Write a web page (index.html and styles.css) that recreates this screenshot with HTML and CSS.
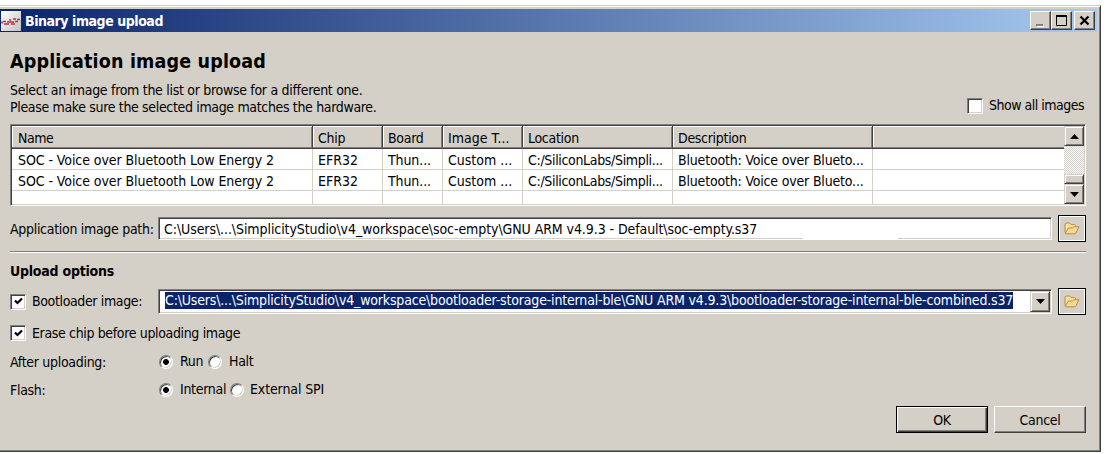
FILE: index.html
```
<!DOCTYPE html>
<html lang="en">
<head>
<meta charset="utf-8">
<title>Binary image upload</title>
<link rel="stylesheet" href="styles.css">
</head>
<body>
<main class="window">
  <header class="titlebar">
    <svg class="app-icon" width="20" height="20" viewBox="0 0 20 20">
      <defs><linearGradient id="tile" x1="0" y1="0" x2="1" y2="1"><stop offset="0" stop-color="#fff"/><stop offset="1" stop-color="#bfc0c8"/></linearGradient></defs>
      <rect width="20" height="20" fill="url(#tile)"/>
      <path d="M1 12.500V10.500M2 10.500H5M3 13H8M6 11H13M8 9H10M12 8H15M10 13H14M14 10.500H17M16 8.500H19" fill="none" stroke="#c8283c" stroke-width="1.700"/>
    </svg>
    <span class="title-text">Binary image upload</span>
    <button class="win-btn"><svg width="17" height="15"><path d="M5 13.500h7" stroke="#fff"/><path d="M4 12h7" stroke="#808080" stroke-width="2"/></svg></button>
    <button class="win-btn"><svg width="17" height="15"><path d="M3.500 2.500h10v10h-10z" fill="none" stroke="#000"/><path d="M3 3h11" stroke="#000" stroke-width="2"/></svg></button>
    <button class="win-btn close"><svg width="17" height="15"><path d="M4.500 3.500l8 8M12.500 3.500l-8 8" stroke="#000" stroke-width="2.200"/></svg></button>
  </header>

  <section class="content">
    <h1>Application image upload</h1>
    <div class="intro">
      <p><span class="intro-a">Select an image from the list or browse for a different one.</span><br><span class="intro-b">Please make sure the selected image matches the hardware.</span></p>
      <label class="show-all"><i class="check"></i><span>Show all images</span></label>
    </div>

    <div class="table">
      <div class="grid">
        <div class="row head"><div class="name">Name</div><div>Chip</div><div>Board</div><div class="type">Image T...</div><div>Location</div><div>Description</div><div></div></div>
        <div class="row"><div class="soc">SOC - Voice over Bluetooth Low Energy 2</div><div class="efr">EFR32</div><div class="thun">Thun...</div><div class="type">Custom ...</div><div class="loc">C:/SiliconLabs/Simpli...</div><div class="desc">Bluetooth: Voice over Blueto...</div><div></div></div>
        <div class="row"><div class="soc">SOC - Voice over Bluetooth Low Energy 2</div><div class="efr">EFR32</div><div class="thun">Thun...</div><div class="type">Custom ...</div><div class="loc">C:/SiliconLabs/Simpli...</div><div class="desc">Bluetooth: Voice over Blueto...</div><div></div></div>
        <div class="row last"><div></div><div></div><div></div><div></div><div></div><div></div><div></div></div>
      </div>
      <div class="scrollbar">
        <div class="sb-btn"><svg width="9" height="5"><path d="M0 5L4.500 0L9 5z"/></svg></div>
        <div class="track"></div>
        <div class="thumb"></div>
        <div class="sb-btn"><svg width="9" height="5"><path d="M0 0L4.500 5L9 0z"/></svg></div>
      </div>
    </div>

    <div class="path-row">
      <span class="path-label">Application image path:</span>
      <div class="field"><span class="path-a">C:\Users\...\SimplicityStudio\v4_workspace\soc-empty\GNU ARM v4.9.3 - Default\soc-empty.s37</span><i class="field-gap"></i></div>
      <button class="browse"><svg width="16" height="13" viewBox="0 0 16 13"><path d="M1 10.500V2L2.500 1H5.500L7 2.500H10.500L11.500 3.500V6" fill="#f5df9e" stroke="#b98a4a"/><path d="M1.300 11L4.500 6H8.500L10 4.700H15L11.800 11.200Q11.500 11.800 11 11.800H2Q1.200 11.800 1.300 11z" fill="#fbd98c" stroke="#b98a4a"/></svg></button>
    </div>
    <hr>
    <h2>Upload options</h2>
    <div class="boot-row">
      <label class="boot-label"><i class="check"><svg width="9" height="9"><path d="M1 3.500L3.500 6L8 1.500" /></svg></i><span>Bootloader image:</span></label>
      <div class="field combo"><span class="path-b">C:\Users\...\SimplicityStudio\v4_workspace\bootloader-storage-internal-ble\GNU ARM v4.9.3\bootloader-storage-internal-ble-combined.s37</span><div class="sb-btn drop"><svg width="9" height="5"><path d="M0 0L4.500 5L9 0z"/></svg></div></div>
      <button class="browse"><svg width="16" height="13" viewBox="0 0 16 13"><path d="M1 10.500V2L2.500 1H5.500L7 2.500H10.500L11.500 3.500V6" fill="#f5df9e" stroke="#b98a4a"/><path d="M1.300 11L4.500 6H8.500L10 4.700H15L11.800 11.200Q11.500 11.800 11 11.800H2Q1.200 11.800 1.300 11z" fill="#fbd98c" stroke="#b98a4a"/></svg></button>
    </div>
    <label class="erase"><i class="check"><svg width="9" height="9"><path d="M1 3.500L3.500 6L8 1.500" /></svg></i><span>Erase chip before uploading image</span></label>
    <div class="radio-row after">
      <span class="radio-label">After uploading:</span>
      <i class="radio on"></i><span class="opt-run">Run</span><i class="radio"></i><span class="opt">Halt</span>
    </div>
    <div class="radio-row flash">
      <span class="radio-label">Flash:</span>
      <i class="radio on"></i><span class="opt-int">Internal</span><i class="radio"></i><span class="opt ext">External SPI</span>
    </div>
    <footer><button class="btn ok">OK</button><button class="btn">Cancel</button></footer>
  </section>
</main>
</body>
</html>
```
FILE: styles.css
```
* { box-sizing: border-box; }
body {
  margin: 0;
  padding-top: 5px;
  background: #fff;
  color: #000;
  font: 14px/17px "DejaVu Sans Condensed", "DejaVu Sans", sans-serif;
  font-stretch: condensed;
  letter-spacing: -0.3px;
  overflow: hidden;
  white-space: nowrap;
}
h1, h2, p { margin: 0; }
button { font: inherit; letter-spacing: inherit; color: inherit; padding: 0; border: 0; background: #d4d0c8; }
svg { display: block; }
i { display: block; flex: none; }

.window {
  width: 1101px;
  height: 447px;
  padding: 2px 2px 0 0;
  background: #d4d0c8;
  border-top: 1px solid #d4d0c8;
  border-right: 1px solid #404040;
  border-bottom: 1px solid #404040;
  box-shadow: inset 0 1px #fff, inset -1px -1px #808080;
}
.titlebar {
  display: flex;
  align-items: center;
  width: 1097px;
  height: 23px;
  margin-top: 1px;
  padding: 0 2px 0 1px;
  background: linear-gradient(90deg, #0a246a, #a6caf0);
}
.title-text { flex: 1; margin-left: 4px; padding-top: 2px; color: #fff; font-weight: bold; letter-spacing: -0.45px; }
.win-btn {
  display: grid;
  place-items: center;
  width: 21px;
  height: 19px;
  border: 1px solid;
  border-color: #fff #404040 #404040 #fff;
  box-shadow: inset -1px -1px #808080;
}
.close { margin-left: 2px; }

.content { padding: 0 0 0 10px; width: 1086px; }
h1 { height: 50px; padding-top: 18px; font-size: 19.5px; line-height: 24px; letter-spacing: 0.16px; }
.intro { display: flex; justify-content: space-between; height: 42px; }
.intro-a { letter-spacing: -0.3px; }
.intro-b { letter-spacing: -0.34px; }
.show-all { display: flex; align-items: center; gap: 6px; height: 17px; margin-top: 15px; width: 119px; letter-spacing: -0.5px; }
.check {
  display: grid;
  place-items: center;
  width: 16px;
  height: 16px;
  background: #fff;
  border: 1px solid;
  border-color: #808080 #fff #fff #808080;
  box-shadow: inset 1px 1px #404040, inset -1px -1px #d4d0c8;
}
.check path { fill: none; stroke: #000; stroke-width: 2.2; }

.table {
  display: flex;
  height: 82px;
  padding: 1px;
  background: #fff;
  border: 1px solid;
  border-color: #808080 #fff #fff #808080;
  box-shadow: inset 1px 1px #404040, inset -1px -1px #d4d0c8;
}
.grid { flex: 1; }
.row { display: grid; grid-template-columns: 301px 70px 60px 80px 150px 200px 1fr; height: 21px; }
.row > div { padding: 3px 0 0 5px; border-right: 1px solid #d4d0c8; border-bottom: 1px solid #d4d0c8; }
.row > div:first-child { padding-left: 6px; }
.row > div:last-child { border-right: 0; }
.row.head { height: 23px; background: #d4d0c8; border-bottom: 1px solid #404040; }
.row.head > div { padding-top: 4px; border-bottom-color: #808080; border-right-color: #404040; box-shadow: inset 1px 1px #fff, inset -1px 0 #808080; }
.row.head > div:last-child { box-shadow: inset 1px 1px #fff; }
.row.last { height: 14px; }
.row.head .name { letter-spacing: -0.5px; }
.row .soc { letter-spacing: -0.07px; }
.row .efr { letter-spacing: 0; }
.row .thun { letter-spacing: -0.1px; }
.row .type { letter-spacing: 0; }
.row .loc { letter-spacing: -0.33px; }
.row .desc { letter-spacing: -0.18px; }

.scrollbar { display: flex; flex-direction: column; width: 20px; }
.sb-btn, .thumb {
  display: grid;
  place-items: center;
  height: 20px;
  background: #d4d0c8;
  border: 1px solid;
  border-color: #d4d0c8 #404040 #404040 #d4d0c8;
  box-shadow: inset 1px 1px #fff, inset -1px -1px #808080;
}
.track { flex: 1; background: repeating-conic-gradient(#fff 0 25%, #d4d0c8 0 50%) 0 0 / 2px 2px; }
.thumb { height: 10px; }

.path-row, .boot-row { display: flex; align-items: center; height: 27px; }
.path-row { margin-top: 9px; }
.path-label { width: 148px; padding-top: 2px; }
.field {
  position: relative;
  width: 894px;
  height: 23px;
  margin-right: 6px;
  padding: 3px 0 0 5px;
  background: #fff;
  border: 1px solid;
  border-color: #808080 #fff #fff #808080;
  box-shadow: inset 1px 1px #404040, inset -1px -1px #d4d0c8;
}
.field-gap { position: absolute; left: 644px; bottom: 0; width: 95px; height: 1px; background: #fff; }
.path-a { letter-spacing: -0.08px; }
.browse {
  display: grid;
  place-items: center;
  width: 28px;
  height: 27px;
  border: 1px solid #000;
  box-shadow: inset 0 0 0 1px #fff;
}
hr { height: 2px; margin: 9px 0 0; border: 0; border-top: 1px solid #808080; background: #fff; }
h2 { margin-top: 10px; height: 25px; font-size: 14px; line-height: 17px; letter-spacing: -0.23px; }
.boot-label, .erase { display: flex; align-items: center; gap: 6px; }
.boot-label { width: 148px; letter-spacing: -0.37px; }
.combo { display: flex; justify-content: space-between; height: 25px; padding: 1px 1px 1px 6px; }
.path-b { height: 17px; margin-top: 1px; background: #0a246a; color: #fff; letter-spacing: -0.17px; }
.combo .drop { width: 20px; height: 21px; }
.erase { height: 16px; margin-top: 10px; letter-spacing: -0.35px; }
.radio-row { display: flex; align-items: center; height: 17px; }
.after { margin-top: 12px; }
.flash { margin-top: 11px; }
.radio-label { width: 149px; padding-top: 1px; }
.radio {
  width: 14px;
  height: 14px;
  border: 1px solid;
  border-color: #808080 #fff #fff #808080;
  border-radius: 50%;
  background: #fff;
  box-shadow: inset 1px 1px #404040, inset -1px -1px #d4d0c8;
}
.radio.on { background: radial-gradient(circle, #000 2.6px, #fff 3.2px); }
.opt-run { width: 28px; margin-left: 7px; }
.opt-int { width: 50px; margin-left: 7px; }
.opt { margin-left: 7px; }
.ext { margin-left: 6px; letter-spacing: -0.12px; }
footer { display: flex; justify-content: flex-end; gap: 6px; margin-top: 8px; }
.btn {
  width: 92px;
  height: 27px;
  padding-top: 1px;
  border: 1px solid;
  border-color: #fff #404040 #404040 #fff;
  box-shadow: inset -1px -1px #808080;
}
.ok { border-color: #000; box-shadow: inset 1px 1px #fff, inset -1px -1px #404040, inset -2px -2px #808080; }
```
